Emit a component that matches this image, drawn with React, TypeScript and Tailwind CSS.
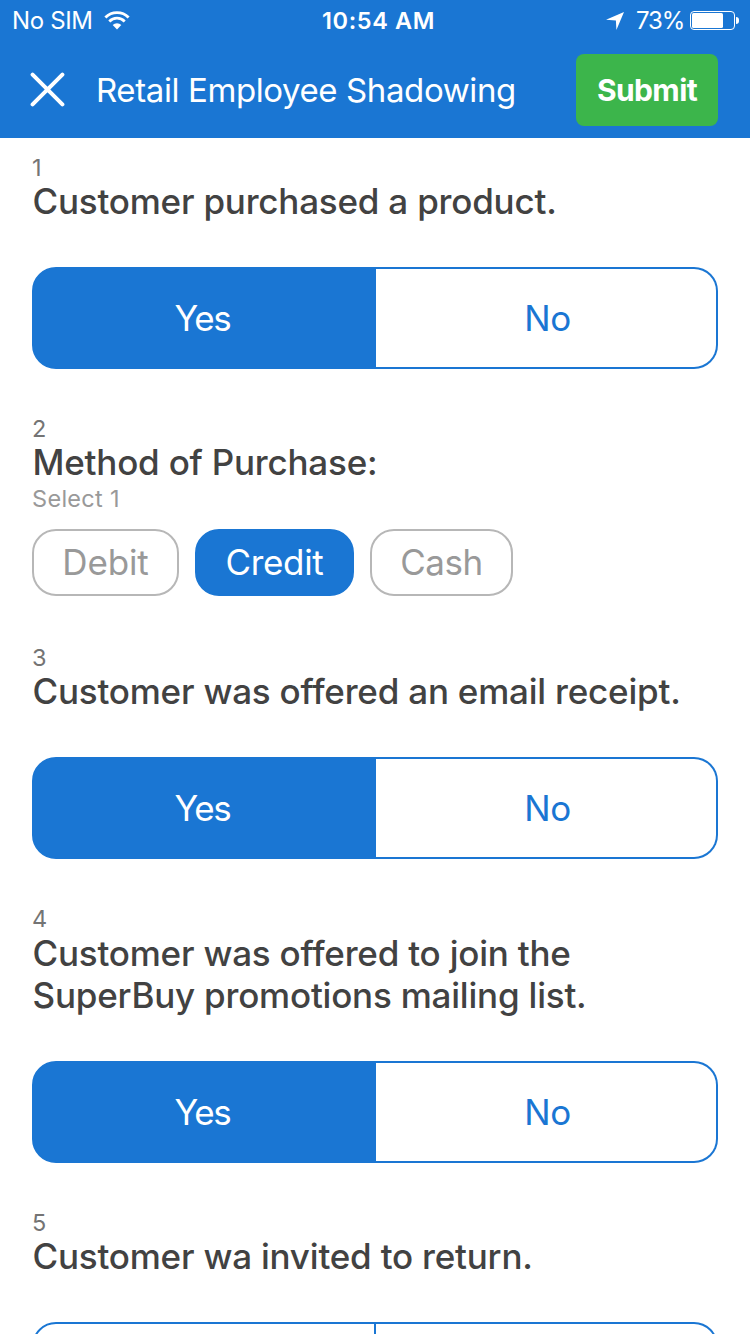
import React, { useState } from "react";

function WifiIcon() {
  return (
    <svg width="26" height="19" viewBox="0 0 26 19" className="block" fill="none">
      <path d="M1.4 6.4 A16.4 16.4 0 0 1 24.6 6.4" stroke="white" strokeWidth="2.9" />
      <path d="M5.3 10.4 A10.9 10.9 0 0 1 20.7 10.4" stroke="white" strokeWidth="2.8" />
      <path d="M13 18.5 L8.7 14.1 A6.1 6.1 0 0 1 17.3 14.1 Z" fill="white" />
    </svg>
  );
}

function LocationIcon() {
  return (
    <svg width="18" height="18" viewBox="0 0 18 18" className="mt-px block">
      <path d="M18 0 L10.4 18 L9.9 8.6 L0 7.8 Z" fill="white" />
    </svg>
  );
}

function Battery() {
  return (
    <div className="flex items-center gap-px">
      <div className="h-[19px] w-[45px] rounded-[4px] border border-white p-px">
        <div className="h-[15px] w-[31px] rounded-[1.5px] bg-white" />
      </div>
      <div className="h-[7px] w-[3px] rounded-r-full bg-white" />
    </div>
  );
}

function StatusBar() {
  return (
    <div className="grid h-10 grid-cols-[250px_1fr_250px] items-center text-2xl leading-10 text-white">
      <div className="flex items-center pl-3">
        <span className="w-[91.5px] pt-0.5 text-2xl leading-[38px] tracking-[-0.35px]">No SIM</span>
        <WifiIcon />
      </div>
      <div className="pt-0.5 pl-[72px] text-[23.5px] leading-[38px] font-semibold tracking-[0.62px]">10:54 AM</div>
      <div className="flex items-center justify-end pr-[11px]">
        <LocationIcon />
        <span className="mr-[6px] ml-[12px] w-[48px] pt-0.5 leading-[38px] tracking-[-1.15px] whitespace-nowrap">73%</span>
        <Battery />
      </div>
    </div>
  );
}

function Header() {
  return (
    <header className="h-[138px] bg-[#1a76d3]">
      <StatusBar />
      <div className="flex h-[98px] items-center pr-8 pl-[30px] text-white">
        <button aria-label="Close" className="w-[66px]">
          <svg width="35" height="35" viewBox="0 0 35 35" className="block">
            <path d="M2.6 2.6 L32.4 32.4 M32.4 2.6 L2.6 32.4" stroke="white" strokeWidth="4" strokeLinecap="round" />
          </svg>
        </button>
        <h1 className="flex-1 pt-1 text-[33px] tracking-[-0.4px] whitespace-nowrap">Retail Employee Shadowing</h1>
        <button className="mt-[2px] h-[72px] w-[142px] rounded-lg bg-[#3cb54b] text-[30px] font-bold tracking-[-0.6px]">
          Submit
        </button>
      </div>
    </header>
  );
}

type QuestionProps = {
  number: number;
  title: string[];
  hint?: string;
  children: React.ReactNode;
};

function Question({ number, title, hint, children }: QuestionProps) {
  return (
    <section>
      <div className="h-[26px] text-[23.5px] leading-[28px] text-[#747474]">{number}</div>
      <h2
        className={`pl-[0.5px] text-[35px] leading-[42px] font-medium tracking-[-0.21px] whitespace-nowrap text-[#424242] ${
          title.length > 1 ? "pt-px" : ""
        }`}
      >
        {title.map((line) => (
          <span key={line} className="block">
            {line}
          </span>
        ))}
      </h2>
      {hint && <p className="mb-3.5 text-[23.5px] leading-[32px] tracking-[0.3px] text-[#999999]">{hint}</p>}
      {children}
    </section>
  );
}

function YesNo({ initial }: { initial?: "Yes" | "No" }) {
  const [value, setValue] = useState(initial);
  const active = "bg-[#1a76d3] text-white";
  const idle = "bg-white text-[#1a76d3]";
  return (
    <div className="mt-[45px] flex h-[102px] text-[35px]">
      <button
        onClick={() => setValue("Yes")}
        className={`w-[344px] rounded-l-[24px] border-2 border-[#1a76d3] pr-[3px] tracking-[-1.4px] ${value === "Yes" ? active : idle}`}
      >
        Yes
      </button>
      <button
        onClick={() => setValue("No")}
        className={`flex-1 rounded-r-[24px] border-2 border-l-0 border-[#1a76d3] pl-[3px] tracking-[-0.4px] ${value === "No" ? active : idle}`}
      >
        No
      </button>
    </div>
  );
}

function Chips() {
  const [value, setValue] = useState("Credit");
  const options = [
    { label: "Debit", size: "w-[147px] tracking-[-0.15px]" },
    { label: "Credit", size: "w-[159px] tracking-[-0.35px]" },
    { label: "Cash", size: "w-[143px] tracking-[-0.5px]" },
  ];
  return (
    <div className="flex gap-4">
      {options.map(({ label, size }) => (
        <button
          key={label}
          onClick={() => setValue(label)}
          className={`h-[67px] rounded-[24px] border-2 pb-px text-[35px] leading-[62px] ${size} ${
            value === label ? "border-[#1a76d3] bg-[#1a76d3] text-white" : "border-[#b7b7b7] bg-white text-[#999999]"
          }`}
        >
          {label}
        </button>
      ))}
    </div>
  );
}

export default function App() {
  return (
    <div className="h-[1334px] w-[750px] overflow-hidden bg-white font-['Inter','Liberation_Sans',sans-serif]">
      <Header />
      <main className="flex flex-col px-8 pt-4">
        <Question number={1} title={["Customer purchased a product."]}>
          <YesNo initial="Yes" />
        </Question>
        <div className="h-[46px]" />
        <Question number={2} title={["Method of Purchase:"]} hint="Select 1">
          <Chips />
        </Question>
        <div className="h-12" />
        <Question number={3} title={["Customer was offered an email receipt."]}>
          <YesNo initial="Yes" />
        </Question>
        <div className="h-[46px]" />
        <Question number={4} title={["Customer was offered to join the", "SuperBuy promotions mailing list."]}>
          <YesNo initial="Yes" />
        </Question>
        <div className="h-[46px]" />
        <Question number={5} title={["Customer wa invited to return."]}>
          <YesNo />
        </Question>
      </main>
    </div>
  );
}
